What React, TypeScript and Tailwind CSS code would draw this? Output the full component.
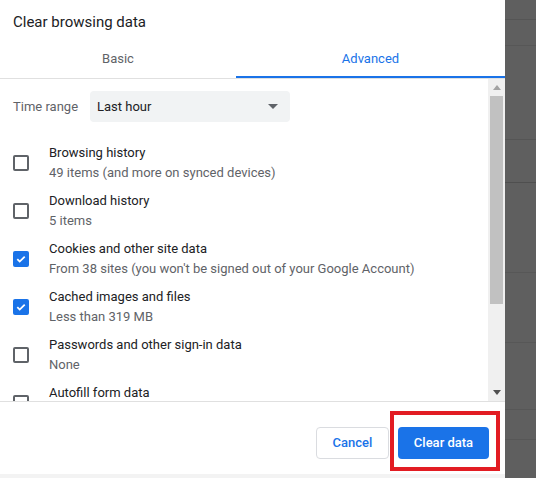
import React from 'react';

const items = [
  { title: 'Browsing history', sub: '49 items (and more on synced devices)', checked: false },
  { title: 'Download history', sub: '5 items', checked: false },
  { title: 'Cookies and other site data', sub: "From 38 sites (you won't be signed out of your Google Account)", checked: true },
  { title: 'Cached images and files', sub: 'Less than 319 MB', checked: true },
  { title: 'Passwords and other sign-in data', sub: 'None', checked: false },
  { title: 'Autofill form data', sub: '', checked: false },
];

function Checkbox({ checked }: { checked: boolean }) {
  if (checked) {
    return (
      <div className="w-[16px] h-[16px] rounded-[2px] bg-[#1a73e8] flex items-center justify-center shrink-0">
        <svg width="12" height="12" viewBox="0 0 12 12">
          <path d="M2.3 6.2l2.4 2.4 5-5" fill="none" stroke="#fff" strokeWidth="1.8" />
        </svg>
      </div>
    );
  }
  return <div className="w-[16px] h-[16px] rounded-[2px] border-2 border-[#5f6368] shrink-0" />;
}

export default function App() {
  return (
    <div
      className="w-[536px] h-[478px] flex overflow-hidden text-[#202124]"
      style={{ fontFamily: 'Roboto, "Liberation Sans", Arial, sans-serif' }}
    >
      {/* Dialog */}
      <div className="w-[505px] h-full bg-white flex flex-col">
        <div className="h-[40px] pl-[13px] pt-[12px] text-[15px] leading-[20px] text-[#202124]">
          Clear browsing data
        </div>

        {/* Tabs */}
        <div className="h-[39px] flex border-b border-[#e0e0e0] text-[13px]">
          <div className="w-[236px] flex items-center justify-center text-[#5f6368]">Basic</div>
          <div className="flex-1 flex flex-col">
            <div className="flex-1 flex items-center justify-center text-[#1a73e8] pt-[1px]">Advanced</div>
            <div className="h-[2px] bg-[#1a73e8]" />
          </div>
        </div>

        {/* Scroll area */}
        <div className="h-[322px] flex overflow-hidden">
          <div className="flex-1 overflow-hidden">
            <div className="flex items-center pl-[13px] pt-[12px]">
              <span className="w-[77px] text-[13px] text-[#5f6368]">Time range</span>
              <div className="w-[200px] h-[31px] bg-[#f1f3f4] rounded-[4px] flex items-center justify-between pl-[7px] pr-[12px] text-[13px] text-[#202124]">
                <span>Last hour</span>
                <svg width="10" height="5" viewBox="0 0 10 5">
                  <path d="M0 0h10L5 5z" fill="#5f6368" />
                </svg>
              </div>
            </div>
            <div className="pt-[17px]">
              {items.map((it) => (
                <div key={it.title} className="h-[48px] flex items-center">
                  <div className="w-[49px] pl-[13px] flex">
                    <Checkbox checked={it.checked} />
                  </div>
                  <div className="flex flex-col">
                    <span className="text-[13px] leading-[20px] text-[#202124]">{it.title}</span>
                    <span className="h-[20px] text-[13px] leading-[20px] text-[#5f6368]">{it.sub}</span>
                  </div>
                </div>
              ))}
            </div>
          </div>
          {/* Scrollbar */}
          <div className="w-[17px] bg-[#f0f0f0] flex flex-col items-center">
            <div className="h-[17px] flex items-center justify-center">
              <svg width="8" height="5" viewBox="0 0 8 5">
                <path d="M0 5h8L4 0z" fill="#a3a3a3" />
              </svg>
            </div>
            <div className="w-[13px] h-[208px] bg-[#c1c1c1]" />
            <div className="flex-1" />
            <div className="h-[17px] flex items-center justify-center">
              <svg width="8" height="5" viewBox="0 0 8 5">
                <path d="M0 0h8L4 5z" fill="#505050" />
              </svg>
            </div>
          </div>
        </div>

        {/* Footer */}
        <div className="flex-1 border-t border-[#e0e0e0] flex flex-col">
          <div className="flex-1 flex justify-end items-start pt-[25px] pr-[16px] gap-[9px]">
            <button className="h-[32px] w-[73px] rounded-[4px] border border-[#dadce0] text-[13px] font-medium text-[#1a73e8] bg-white">
              Cancel
            </button>
            <div className="relative">
              <button className="h-[32px] w-[91px] rounded-[4px] bg-[#1a73e8] text-[13px] font-medium text-white">
                Clear data
              </button>
              {/* annotation highlight */}
              <div className="absolute left-[-8px] top-[-16px] w-[110px] h-[60px] border-[4px] border-[#e21c23]" />
            </div>
          </div>
          <div className="h-[4px] bg-[#f3f3f3]" />
        </div>
      </div>

      {/* Dimmed page behind */}
      <div className="flex-1 h-full bg-[#5f5f5f] flex flex-col">
        <div className="h-[20px] border-b border-[#555]" />
        <div className="h-[26px] border-b border-[#575757]" />
        <div className="h-[94px] border-b border-[#555]" />
        <div className="h-[43px] border-b border-[#4f4f4f]" />
        <div className="h-[27px]" />
        <div className="h-[63px] border-b border-[#575757]" />
        <div className="h-[70px] border-b border-[#575757]" />
        <div className="h-[67px] border-b border-[#575757]" />
        <div className="h-[30px] border-b border-[#575757]" />
        <div className="flex-1" />
      </div>
    </div>
  );
}
